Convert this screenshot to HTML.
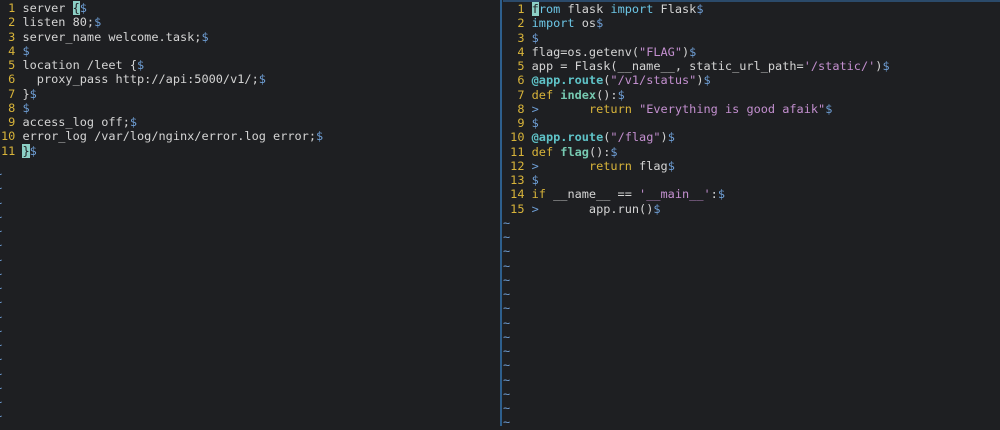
<!DOCTYPE html><html><head><style>
body{margin:0;width:1000px;height:426px;background:#1e1f22;overflow:hidden;font-family:"DejaVu Sans Mono","Liberation Mono",monospace;font-size:11.9px;color:#d4d4d4}
.p{position:absolute;top:0;white-space:pre;line-height:14.25px;padding-top:1px}
#l{left:1px;width:499px}
#r{left:503px;top:0;width:497px;border-top:2px solid #2b4a6a;padding-top:0}
#d{position:absolute;left:500px;top:0;width:2px;height:426px;background:#2e5f8d}
.n{color:#d8b43a}.d{color:#6f9fd6}.t{color:#6f9fd6}
.c{background:#8cd0c6;color:#1e1f22}
.k{color:#6cc6e6}.s{color:#c38fcf}.y{color:#d8b43a}.f{color:#76c8b0;font-weight:bold}.a{color:#5fc3c8;font-weight:bold}
</style></head><body>
<div class="p" id="l"><span class="n"> 1 </span>server <span class="c">{</span><span class="d">$</span>
<span class="n"> 2 </span>listen 80;<span class="d">$</span>
<span class="n"> 3 </span>server_name welcome.task;<span class="d">$</span>
<span class="n"> 4 </span><span class="d">$</span>
<span class="n"> 5 </span>location /leet {<span class="d">$</span>
<span class="n"> 6 </span>  proxy_pass http://api:5000/v1/;<span class="d">$</span>
<span class="n"> 7 </span>}<span class="d">$</span>
<span class="n"> 8 </span><span class="d">$</span>
<span class="n"> 9 </span>access_log off;<span class="d">$</span>
<span class="n">10 </span>error_log /var/log/nginx/error.log error;<span class="d">$</span>
<span class="n">11 </span><span class="c">}</span><span class="d">$</span>
</div>
<div class="p" id="l2" style="left:-5px;top:166px;color:#6f9fd6">~
~
~
~
~
~
~
~
~
~
~
~
~
~
~
~
~
~</div>
<div id="d"></div>
<div class="p" id="r"><span class="n">  1 </span><span class="c">f</span><span class="k">rom</span> flask <span class="k">import</span> Flask<span class="d">$</span>
<span class="n">  2 </span><span class="k">import</span> os<span class="d">$</span>
<span class="n">  3 </span><span class="d">$</span>
<span class="n">  4 </span>flag=os.getenv(<span class="s">"FLAG"</span>)<span class="d">$</span>
<span class="n">  5 </span>app = Flask(__name__, static_url_path=<span class="s">'/static/'</span>)<span class="d">$</span>
<span class="n">  6 </span><span class="a">@app.route</span>(<span class="s">"/v1/status"</span>)<span class="d">$</span>
<span class="n">  7 </span><span class="y">def</span> <span class="f">index</span>():<span class="d">$</span>
<span class="n">  8 </span><span class="d">&gt;</span>       <span class="y">return</span> <span class="s">"Everything is good afaik"</span><span class="d">$</span>
<span class="n">  9 </span><span class="d">$</span>
<span class="n"> 10 </span><span class="a">@app.route</span>(<span class="s">"/flag"</span>)<span class="d">$</span>
<span class="n"> 11 </span><span class="y">def</span> <span class="f">flag</span>():<span class="d">$</span>
<span class="n"> 12 </span><span class="d">&gt;</span>       <span class="y">return</span> flag<span class="d">$</span>
<span class="n"> 13 </span><span class="d">$</span>
<span class="n"> 14 </span><span class="y">if</span> __name__ == <span class="s">'__main__'</span>:<span class="d">$</span>
<span class="n"> 15 </span><span class="d">&gt;</span>       app.run()<span class="d">$</span>
<span class="t">~
~
~
~
~
~
~
~
~
~
~
~
~
~
~</span></div>
</body></html>
